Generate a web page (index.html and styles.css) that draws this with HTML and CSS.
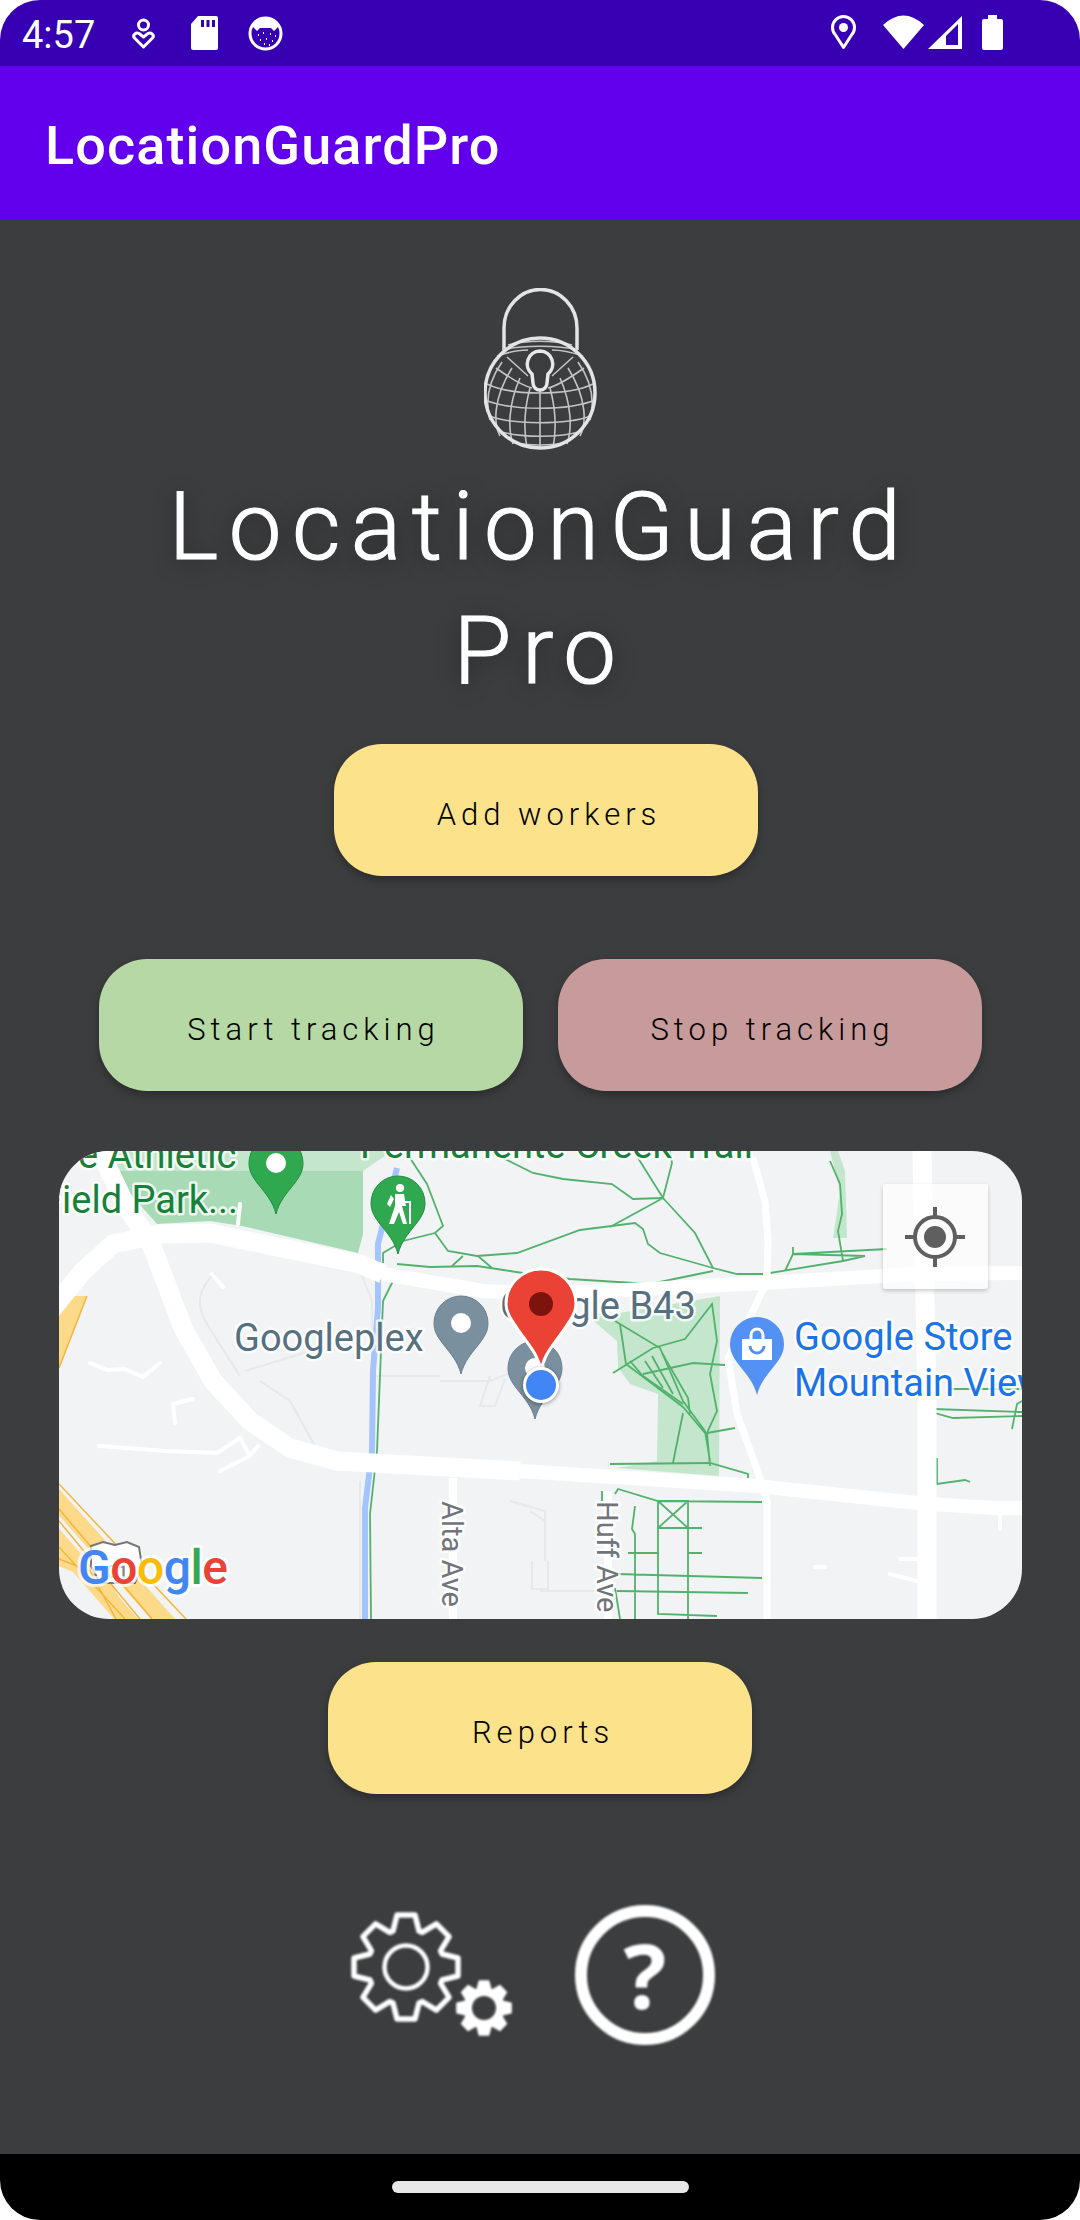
FILE: index.html
```html
<!DOCTYPE html>
<html lang="en">
<head>
<meta charset="utf-8">
<title>LocationGuardPro</title>
<link rel="stylesheet" href="styles.css">
</head>
<body>
<div class="app">
  <header class="status">
    <svg class="status-svg" viewBox="0 0 1080 66" width="1080" height="66">
      <text class="clock" x="22" y="48">4:57</text>
      <circle class="line-w" cx="143.500" cy="25" r="5"/>
      <path class="line-w" d="M143.500 47 L134.500 38 C132 35 136 32 139 33.500 L143.500 37 L148 33.500 C151 32 155 35 152.500 38Z"/>
      <path class="fill-w" d="M198 16H216a2 2 0 0 1 2 2V48a2 2 0 0 1-2 2H193a2 2 0 0 1-2-2V24Z"/>
      <path class="fill-d" d="M201 20h3v7h-3zM206.500 20h3v7h-3zM212 20h3v7h-3z"/>
      <circle class="line-w" cx="265.500" cy="33.500" r="15.500"/>
      <path class="fill-w" d="M252 26 A15 15 0 0 1 279 26 L274 31 L271 28 H260 L257 31Z"/>
      <path class="dots" d="M258 35h1M263 33h1M270 34h1M275 36h1M260 40h1M266 39h1M272 41h1M264 44h1M269 45h1"/>
      <path class="line-w" d="M843.500 47.500 L835.500 35 A11 11 0 1 1 851.500 35Z"/>
      <circle class="fill-w" cx="843.500" cy="27.500" r="4.500"/>
      <path class="fill-w" d="M883 25Q903.500 6 924 25L903.500 49Z"/>
      <path class="fill-w" fill-rule="evenodd" d="M928 49L962 16V49ZM946 45H958V24L946 36Z"/>
      <path class="fill-w" d="M988 15h9v4h4a2 2 0 0 1 2 2V48a2 2 0 0 1-2 2H984a2 2 0 0 1-2-2V21a2 2 0 0 1 2-2h4Z"/>
    </svg>
  </header>
  <div class="appbar">LocationGuardPro</div>

  <main class="content">
    <svg class="logo" viewBox="482 288 113 162" width="113" height="162">
      <path class="logo-main" d="M502 350V328A36 38 0 0 1 575 328V350"/>
      <g class="logo-grid">
        <path d="M538 388V449M528 388C522 410 522 432 525 448M548 388C554 410 554 432 551 448M518 378C506 405 506 430 511 444M558 378C570 405 570 430 565 444M510 368C490 400 492 425 498 436M566 368C586 400 584 425 578 436M500 362C484 385 484 405 488 420M576 362C592 385 592 405 588 420"/>
        <path d="M505 357L526 376M571 357L550 376M494 368C508 378 522 386 530 388M582 368C568 378 554 386 546 388"/>
        <path d="M485 384C510 396 566 396 591 384M483 400C510 411 566 411 593 400M487 416C512 425 564 425 589 416M496 431C518 438 558 438 580 431M510 442C526 446 550 446 566 442"/>
        <path d="M506 345C525 340 551 340 570 345M500 350C520 345 556 345 576 350M495 356C510 351 520 350 526 350M581 356C566 351 556 350 550 350"/>
      </g>
      <circle class="logo-main" cx="538" cy="393" r="55"/>
      <path class="logo-key" d="M538 351A13 13 0 0 1 546 374L545 383A7 7 0 0 1 531 383L530 374A13 13 0 0 1 538 351Z"/>
    </svg>

    <h1 class="title">LocationGuard<br>Pro</h1>

    <button class="btn btn-yellow btn-add">Add workers</button>

    <div class="track-row">
      <button class="btn btn-green">Start tracking</button>
      <button class="btn btn-rose">Stop tracking</button>
    </div>

    <section class="map">
      <svg class="map-svg" viewBox="59 1150 963 468" width="963" height="468">
        <defs>
          <path id="pin" d="M0 51C-3 39-10 31-18 21C-24 13-27 8-27 0A27 27 0 0 1 27 0C27 8 24 13 18 21C10 31 3 39 0 51Z"/>
        </defs>
        <g>
          <path class="park-pale" d="M110 1150H392L363 1170H110Z"/>
          <path class="park" d="M110 1170H363V1233L358 1252L242 1225L210 1220L157 1223Z"/>
          <path class="park-pale" d="M590 1317L720 1295L719 1475L617 1467L657 1460L658 1393L630 1383L618 1367L617 1340Z"/>
          <path class="park-pale" d="M830 1150H838L845 1170L847 1237H833L840 1190Z"/>
        </g>

        <g class="faint">
          <path d="M216 1272C200 1285 195 1300 205 1320L240 1375M260 1380L290 1400L315 1445M360 1270L372 1300V1450M245 1370L310 1350M372 1375H440M440 1380H490L515 1370M490 1375L480 1405H495L505 1378M510 1500L545 1510V1560M545 1520L530 1510M532 1560V1588H548V1560M360 1480V1618M600 1590H540M640 1590H610V1618"/>
        </g>

        <path class="stream" d="M397 1167L378 1243V1307L373 1370L372 1450L365 1507V1618"/>

        <g class="hwy">
          <path class="hwy-base" d="M59 1295V1367L87 1295Z"/>
          <path class="hwy-wide" d="M49 1490L172 1628"/>
          <path class="hwy-wide" d="M49 1530L135 1628"/>
          <path class="hwy-wide thin" d="M49 1555L100 1575L130 1628"/>
          <path class="hwy-edge" d="M59 1483L186 1618M59 1508L152 1618M59 1520L140 1618M59 1546L125 1618M59 1558L90 1570L116 1618M59 1367L87 1295"/>
        </g>

        <g class="trail">
          <path d="M383 1262V1252L403 1240L435 1232L443 1225L427 1183L410 1157"/>
          <path d="M435 1232L448 1250L477 1255L517 1252L580 1229L635 1222L643 1228L648 1243L660 1252L713 1267L737 1273L763 1273"/>
          <path d="M397 1263L430 1266L477 1265L523 1272L570 1278L650 1283L713 1270"/>
          <path d="M393 1280L383 1300L377 1450L370 1513L371 1618"/>
          <path d="M503 1157L533 1172L563 1178L612 1183L633 1198L663 1197L610 1226"/>
          <path d="M638 1157L663 1197L672 1162L670 1150M663 1197L695 1232L713 1267"/>
          <path d="M452 1265L463 1255M478 1255L492 1267"/>
          <path d="M770 1272L843 1260L865 1255L793 1253L785 1270M793 1246V1253M793 1253L887 1248M830 1160L840 1183L842 1213L838 1230L843 1260"/>
          <path d="M615 1320L660 1347L683 1400L705 1430L710 1460M620 1323L626 1363L683 1406L705 1432M613 1372L653 1347L685 1338L712 1303L717 1340L710 1373L717 1410L707 1432L710 1465"/>
          <path d="M630 1360L643 1375L683 1403M643 1373L693 1362L725 1364M645 1360L663 1387M652 1355L673 1393M662 1352L688 1397L690 1413M683 1412L673 1462M707 1432L735 1427M610 1463L710 1462L748 1473V1477"/>
          <path d="M615 1493L618 1488L658 1500L762 1501M658 1500H688V1527H658ZM658 1500L688 1527M688 1500L658 1527M688 1527H702M688 1502V1618M658 1527V1613L717 1615"/>
          <path d="M635 1505L632 1528L635 1533V1618M628 1552H658M688 1552H702M617 1573L762 1577M617 1590L748 1592M615 1587L620 1618M602 1490V1500"/>
          <path d="M933 1400L935 1412L953 1417L1022 1415M933 1408L1022 1411M1012 1428L1017 1403L1022 1400M950 1388L1022 1388"/>
          <path d="M937 1457V1483L965 1479L970 1481"/>
        </g>

        <g class="road">
          <path class="r20" d="M49 1312L83 1270L113 1243L160 1233L210 1232L360 1263L383 1273"/>
          <path class="r16" d="M383 1273L483 1290L550 1293L763 1282L917 1273L1030 1272"/>
          <path class="r20" d="M100 1150L127 1207L150 1240L183 1327L213 1380L250 1420L290 1447L337 1460L520 1470"/>
          <path class="r16" d="M520 1470L757 1485L917 1502L993 1507L1030 1507"/>
          <path class="r20" d="M922 1150L927 1400L927 1618"/>
          <path class="r7" d="M753 1157L765 1200L768 1240L767 1280L753 1310L728 1357L737 1413L760 1477L767 1500V1618"/>
          <path class="r8" d="M453 1477V1618M608 1490V1618"/>
          <path class="r4" d="M90 1362L107 1369L125 1368L143 1376L160 1362M193 1398L173 1403L175 1422M99 1445L167 1450L217 1452L240 1437L250 1455L220 1470M250 1455L258 1445M240 1203L238 1223M212 1273L223 1286"/>
          <path class="r4" d="M1000 1510V1528M900 1558H917M890 1573L917 1580M815 1566H825"/>
        </g>

        <text class="lbl lbl-park" x="78" y="1167">e Athletic</text>
        <text class="lbl lbl-park" x="41" y="1212">Field Park...</text>
        <text class="lbl lbl-park" x="360" y="1157">Permanente Creek Trail</text>
        <text class="lbl lbl-place" x="234" y="1350">Googleplex</text>
        <text class="lbl lbl-place" x="500" y="1318">Google B43</text>
        <text class="lbl lbl-store" x="794" y="1349">Google Store</text>
        <text class="lbl lbl-store" x="794" y="1395">Mountain View</text>
        <text class="lbl lbl-street" transform="translate(442 1500) rotate(90)">Alta Ave</text>
        <text class="lbl lbl-street" transform="translate(597 1500) rotate(90)">Huff Ave</text>

        <g transform="translate(276 1162)">
          <use href="#pin" class="pin-green"/>
          <circle class="fill-w" r="10"/>
        </g>
        <g transform="translate(398 1202)">
          <use href="#pin" class="pin-green"/>
          <circle class="fill-w" cx="2" cy="-15" r="4"/>
          <path class="fill-w" d="M-3-9H6L8 3H4L9 21H5L1 9L-4 21H-9L-3 3Z"/>
          <path class="fill-w" d="M-7-8L-11 1L-8 4L-4-4Z"/>
          <path class="hiker" d="M12-2V21M7-1H12"/>
        </g>
        <g transform="translate(461 1322)">
          <use href="#pin" class="pin-grey"/>
          <circle class="fill-w" r="10"/>
        </g>
        <g transform="translate(535 1367)">
          <use href="#pin" class="pin-grey"/>
          <circle class="fill-w" r="10"/>
        </g>
        <g transform="translate(757 1343)">
          <use href="#pin" class="pin-blue"/>
          <path class="fill-w" d="M-15-5H15L15 16H-15Z"/>
          <path class="bag-handle" d="M-6-5V-9A6 6 0 0 1 6-9V-5"/>
          <path class="bag-smile" d="M-7 2A7 7 0 0 0 7 2"/>
        </g>

        <g transform="translate(541 1303)">
          <path class="pin-red" d="M0 68C-2 52-10 44-22 27C-31 14-35 8-35 0A35 35 0 0 1 35 0C35 8 31 14 22 27C10 44 2 52 0 68Z"/>
          <circle class="pin-red-dot" r="12"/>
        </g>
        <circle class="pos-dot" cx="541" cy="1384" r="16.500"/>

        <g class="shield">
          <path d="M91 1545L103 1541L115 1544L127 1541L139 1546L142 1565L135 1582H100L91 1565Z"/>
          <text x="96" y="1577">101</text>
        </g>
        <text class="google" x="78" y="1583"><tspan class="g-blue">G</tspan><tspan class="g-red">o</tspan><tspan class="g-yellow">o</tspan><tspan class="g-blue">g</tspan><tspan class="g-green">l</tspan><tspan class="g-red">e</tspan></text>
      </svg>

      <div class="locate">
        <svg viewBox="0 0 64 64" width="64" height="64">
          <circle class="locate-ring" cx="32" cy="32" r="20"/>
          <circle class="locate-dot" cx="32" cy="32" r="11"/>
          <path class="locate-ring" d="M32 2V12M32 52V62M2 32H12M52 32H62"/>
        </svg>
      </div>
    </section>

    <button class="btn btn-yellow btn-reports">Reports</button>

    <div class="tools">
      <svg class="tool-gears" viewBox="0 0 170 148" width="170" height="148">
        <defs>
          <polygon id="gear" points="-13,-36 -9,-52 9,-52 13,-36 16.300,-34.600 30.400,-43.100 43.100,-30.400 34.600,-16.300 36,-13 52,-9 52,9 36,13 34.600,16.300 43.100,30.400 30.400,43.100 16.300,34.600 13,36 9,52 -9,52 -13,36 -16.300,34.600 -30.400,43.100 -43.100,30.400 -34.600,16.300 -36,13 -52,9 -52,-9 -36,-13 -34.600,-16.300 -43.100,-30.400 -30.400,-43.100 -16.300,-34.600"/>
        </defs>
        <use href="#gear" class="gear-big" transform="translate(61 66)"/>
        <circle class="gear-ring" cx="61" cy="66" r="21.500"/>
        <use href="#gear" class="gear-small" transform="translate(139 107) scale(.52)"/>
        <circle class="gear-hole" cx="139" cy="107" r="12"/>
      </svg>
      <svg class="tool-help" viewBox="0 0 148 148" width="148" height="148">
        <circle class="help-ring" cx="75" cy="74" r="64"/>
        <text class="help-mark" x="75" y="108">?</text>
      </svg>
    </div>
  </main>

  <footer class="navbar"><span class="pill"></span></footer>
</div>
</body>
</html>
```

FILE: styles.css
```css
* { box-sizing: border-box; }
html, body { margin: 0; padding: 0; background: #fff; }
body { width: 1080px; height: 2220px; overflow: hidden; font-family: Roboto, "Liberation Sans", sans-serif; }

.app { width: 1080px; height: 2220px; display: flex; flex-direction: column; border-radius: 40px; overflow: hidden; }

.status { height: 66px; background: #3700b3; flex: none; }
.status-svg { display: block; }
.clock { font: 400 38px Roboto, sans-serif; fill: #fff; }
.fill-w { fill: #fff; }
.fill-d { fill: #3700b3; }
.line-w { fill: none; stroke: #fff; stroke-width: 3; stroke-linejoin: round; }
.dots { stroke: #fff; stroke-width: 2; fill: none; }

.appbar { height: 154px; flex: none; background: #6200ee; color: #fff; font: 500 54px/148px Roboto, sans-serif; letter-spacing: 1.100px; padding: 6px 0 0 45px; }

.content { flex: 1; background: #3c3d3f; display: flex; flex-direction: column; align-items: center; padding-top: 68px; }

.logo { display: block; flex: none; filter: blur(.6px); }
.logo-main { fill: none; stroke: #e4e4e4; stroke-width: 3.500; }
.logo-grid path { fill: none; stroke: #c4c4c4; stroke-width: 1.600; }
.logo-key { fill: #3c3d3f; stroke: #e8e8e8; stroke-width: 3.500; }

.title { margin: 15px 0 0; font: 300 94px/124px Roboto, sans-serif; letter-spacing: 10.500px; color: #fff; -webkit-text-stroke: 1.200px #fff; text-align: center; text-shadow: 0 3px 22px rgba(0,0,0,.4); }

.btn { display: block; width: 424px; height: 132px; border: 0; border-radius: 48px; font: 300 31px/1 Roboto, sans-serif; letter-spacing: 5px; color: #000; padding: 8px 0 0 6px; box-shadow: 0 4px 8px rgba(0,0,0,.3); }
.btn-yellow { background: #fde28c; }
.btn-green { background: #b5d8a4; }
.btn-rose { background: #c79a9b; }
.btn-add { margin: 31px 0 0 12px; }

.track-row { display: flex; gap: 35px; margin-top: 83px; }

.map { position: relative; width: 963px; height: 468px; margin-top: 60px; border-radius: 50px; overflow: hidden; background: #f2f3f5; flex: none; }
.map-svg { display: block; }

.park { fill: #a8dab5; }
.park-pale { fill: #c4e6cc; }
.faint path { fill: none; stroke: #e7e8ea; stroke-width: 2; }
.stream { fill: none; stroke: #a3c4fc; stroke-width: 6; }
.hwy-base { fill: #fdd98a; }
.hwy-wide { fill: none; stroke: #fdd98a; stroke-width: 18; }
.hwy-wide.thin { stroke-width: 12; }
.hwy-edge { fill: none; stroke: #f3b63c; stroke-width: 1.500; }
.trail path { fill: none; stroke: #52b26d; stroke-width: 1.800; }
.road path { fill: none; stroke: #fff; stroke-linejoin: round; stroke-linecap: round; }
.road .r20 { stroke-width: 19; stroke-linecap: butt; }
.road .r16 { stroke-width: 14; stroke-linecap: butt; }
.road .r7 { stroke-width: 7; stroke-linecap: butt; }
.road .r8 { stroke-width: 8; stroke-linecap: butt; }
.road .r4 { stroke-width: 4; }

.lbl { font-family: Roboto, sans-serif; font-size: 38px; paint-order: stroke; stroke: #fff; stroke-opacity: .8; stroke-width: 5px; stroke-linejoin: round; }
.lbl-park { fill: #188038; }
.lbl-place { fill: #56707f; }
.lbl-store { fill: #1a73e8; }
.lbl-street { fill: #70757a; font-size: 29px; }

.pin-green { fill: #2fa84f; stroke: #1f8e3e; stroke-width: 1; }
.pin-grey { fill: #7a909e; stroke: #6b818f; stroke-width: 1; }
.pin-blue { fill: #5491f5; }
.pin-red { fill: #ea4335; stroke: #fff; stroke-width: 3; }
.pin-red-dot { fill: #7d130d; }
.pos-dot { fill: #4285f4; stroke: #fff; stroke-width: 3; filter: drop-shadow(0 1px 2px rgba(0,0,0,.4)); }
.hiker { fill: none; stroke: #fff; stroke-width: 2; }
.bag-handle { fill: none; stroke: #fff; stroke-width: 3; }
.bag-smile { fill: none; stroke: #5491f5; stroke-width: 3; }

.shield path { fill: #fff; stroke: #777; stroke-width: 2; }
.shield text { font: 500 19px Roboto, sans-serif; fill: #888; }
.google { font: 500 48px Roboto, sans-serif; paint-order: stroke; stroke: #fff; stroke-opacity: .75; stroke-width: 6px; stroke-linejoin: round; letter-spacing: -.5px; }
.g-blue { fill: #4285f4; }
.g-red { fill: #ea4335; }
.g-yellow { fill: #fbbc05; }
.g-green { fill: #34a853; }

.locate { position: absolute; left: 824px; top: 33px; width: 105px; height: 105px; display: flex; align-items: center; justify-content: center; background: rgba(255,255,255,.68); border-radius: 3px; box-shadow: 0 2px 4px rgba(0,0,0,.2); }
.locate svg { display: block; }
.locate-ring { fill: none; stroke: #5f5f5f; stroke-width: 4; }
.locate-dot { fill: #5f5f5f; }

.btn-reports { margin-top: 43px; }

.tools { display: flex; gap: 55px; margin: 107px 0 0 -17px; filter: blur(.8px); }
.tool-gears, .tool-help { display: block; }
.gear-big { fill: none; stroke: #fff; stroke-width: 5.500; stroke-linejoin: round; }
.gear-ring { fill: none; stroke: #fff; stroke-width: 4.500; }
.gear-small { fill: #fff; stroke: #fff; stroke-width: 3; stroke-linejoin: round; }
.gear-hole { fill: #3c3d3f; }
.help-ring { fill: none; stroke: #fff; stroke-width: 12; }
.help-mark { font: 700 90px "Open Sans", sans-serif; fill: #fff; text-anchor: middle; }

.navbar { height: 66px; flex: none; background: #000; display: flex; align-items: center; justify-content: center; }
.pill { display: block; width: 297px; height: 12px; border-radius: 6px; background: #e8e8e8; }
```
